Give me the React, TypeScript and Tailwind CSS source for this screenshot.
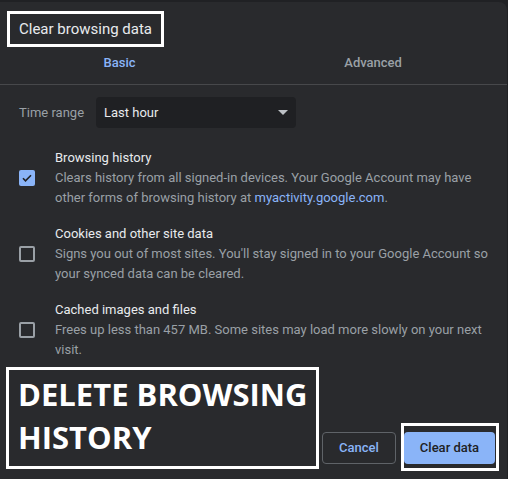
import React from "react";

const items = [
  {
    title: "Browsing history",
    checked: true,
    desc: (
      <>
        Clears history from all signed-in devices. Your Google Account may have other forms of browsing history at{" "}
        <span className="text-[#8ab4f8]">myactivity.google.com</span>.
      </>
    ),
  },
  {
    title: "Cookies and other site data",
    checked: false,
    desc: <>Signs you out of most sites. You'll stay signed in to your Google Account so your synced data can be cleared.</>,
  },
  {
    title: "Cached images and files",
    checked: false,
    desc: <>Frees up less than 457 MB. Some sites may load more slowly on your next visit.</>,
  },
];

function Checkbox({ checked }: { checked: boolean }) {
  if (checked) {
    return (
      <div className="w-[16px] h-[16px] rounded-[2px] bg-[#8ab4f8] flex items-center justify-center">
        <svg width="12" height="12" viewBox="0 0 24 24">
          <path d="M4 12.5l5 5L20 6.5" fill="none" stroke="#202124" strokeWidth="3.2" />
        </svg>
      </div>
    );
  }
  return <div className="w-[16px] h-[16px] rounded-[2px] border-2 border-[#9aa0a6]" />;
}

export default function App() {
  return (
    <div className="w-[508px] h-[479px] bg-[#202124] pt-[2px] overflow-hidden font-['Roboto',sans-serif]">
      <div className="h-full mr-[1px] bg-[#292a2d] rounded-tr-[8px] flex flex-col">
        <div className="ml-[7px] mt-[9px] w-fit border-[3px] border-white px-[9px] py-[5px] text-[15px] leading-[20px] text-[#e8eaed]">
          Clear browsing data
        </div>

        <div className="flex h-[37px] pt-[6px] items-start text-[13px] leading-[20px] font-medium">
          <div className="w-[242px] text-center text-[#8ab4f8]">Basic</div>
          <div className="w-[271px] text-center text-[#9aa0a6]">Advanced</div>
        </div>
        <div className="h-px bg-[#47484b]" />

        <div className="flex items-center mt-[12px] pl-[19px]">
          <span className="w-[77px] text-[13px] text-[#9aa0a6]">Time range</span>
          <div className="w-[200px] h-[31px] rounded-[4px] bg-[#1f2023] flex items-center justify-between pl-[8px] pr-[8px] text-[13px] text-[#e8eaed]">
            <span>Last hour</span>
            <svg width="10" height="5" viewBox="0 0 10 5">
              <path d="M0 0h10L5 5z" fill="#bdc1c6" />
            </svg>
          </div>
        </div>

        <div className="flex flex-col gap-[16px] mt-[20px]">
          {items.map((it) => (
            <div key={it.title} className="flex items-center pl-[19px] pr-[14px]">
              <div className="w-[36px] shrink-0">
                <Checkbox checked={it.checked} />
              </div>
              <div className="text-[13px] leading-[20px]">
                <div className="text-[#e8eaed]">{it.title}</div>
                <div className="text-[#9aa0a6]">{it.desc}</div>
              </div>
            </div>
          ))}
        </div>

        <div className="flex items-start pl-[6px] mt-[7px]">
          <div className="w-[313px] h-[102px] border-[3px] border-white pl-[9px] pt-[3px] font-['Open_Sans',sans-serif] font-bold text-[31px] leading-[43px] text-white">
            DELETE BROWSING
            <br />
            HISTORY
          </div>
          <button className="ml-[3px] mt-[65px] w-[74px] h-[32px] rounded-[4px] border border-[#5f6368] text-[13px] font-medium text-[#8ab4f8]">
            Cancel
          </button>
          <div className="ml-[5px] mt-[56px] border-[3px] border-white pt-[6px] pb-[4px] pr-[1px]">
            <button className="w-[91px] h-[32px] rounded-[4px] bg-[#8ab4f8] text-[13px] font-medium text-[#202124]">
              Clear data
            </button>
          </div>
        </div>
      </div>
    </div>
  );
}
